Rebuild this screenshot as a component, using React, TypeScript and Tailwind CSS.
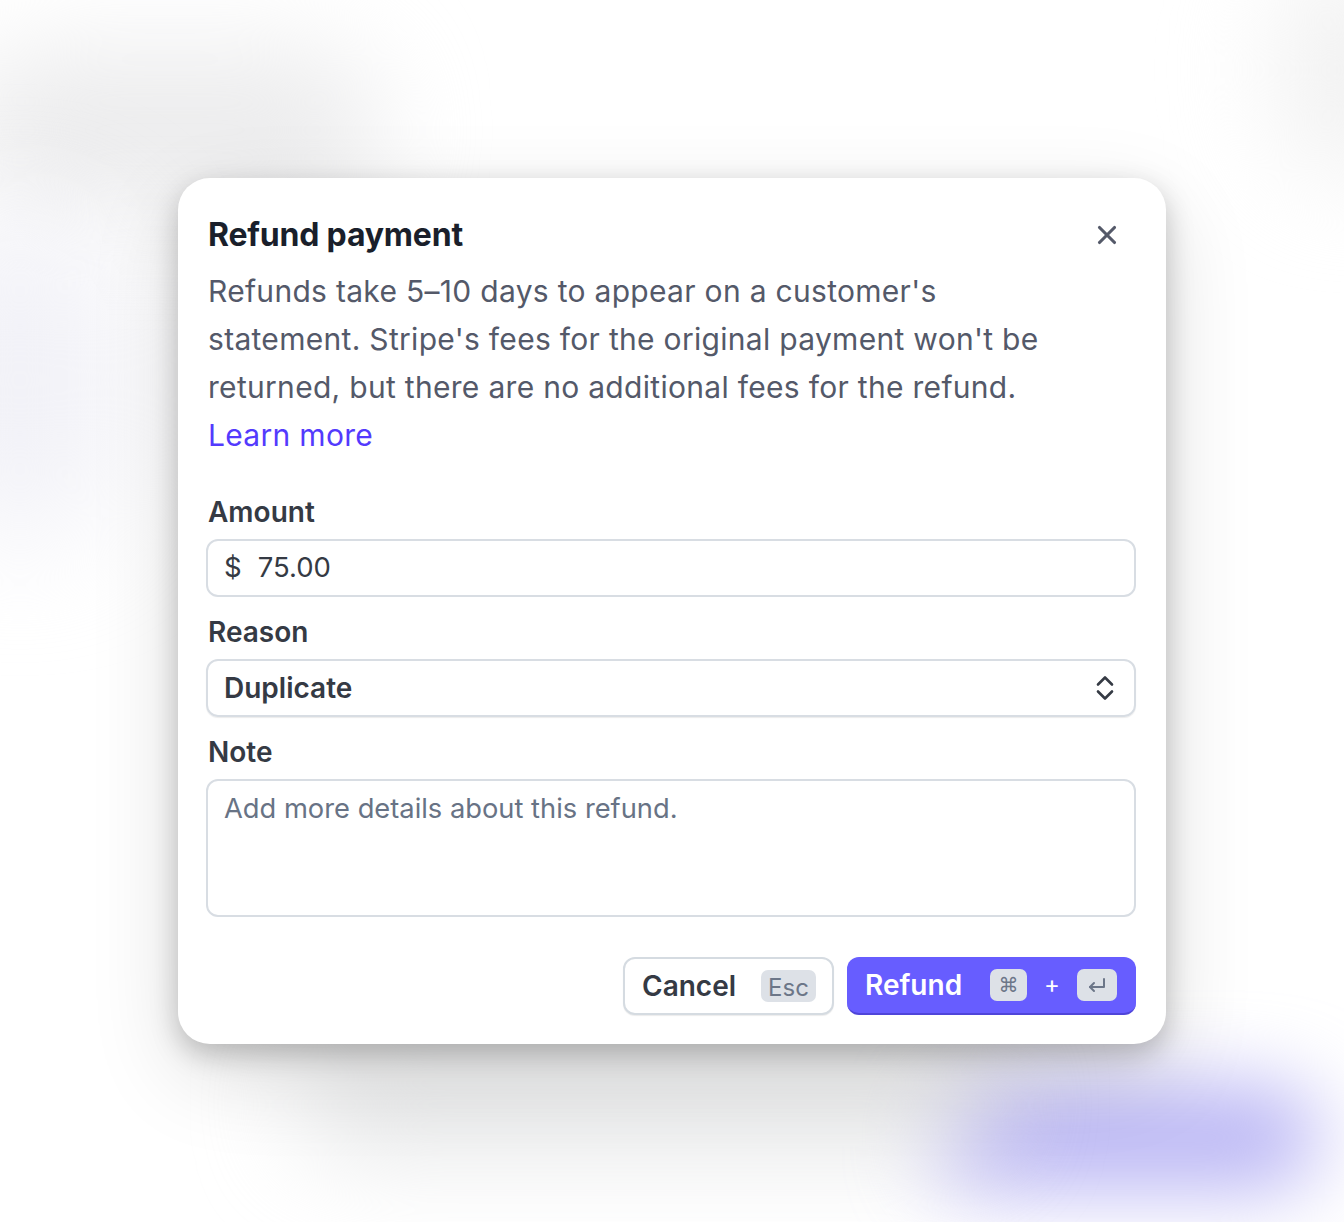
import { X } from 'lucide-react';

function Kbd({ children, className = '' }: { children: React.ReactNode; className?: string }) {
  return (
    <span
      className={`grid h-8 place-items-center rounded-[7px] bg-[#dde1e7] text-[24px] font-normal text-[#6c7688] ${className}`}
    >
      {children}
    </span>
  );
}

function ChevronUpDown() {
  return (
    <svg width="22" height="28" viewBox="0 0 22 28" fill="none" stroke="#353a44" strokeWidth="2.6" strokeLinecap="round" strokeLinejoin="round">
      <path d="M4 10.5 11 3.5l7 7" />
      <path d="M4 17.5l7 7 7-7" />
    </svg>
  );
}

function ReturnIcon() {
  return (
    <svg width="22" height="18" viewBox="0 0 22 18" fill="none" stroke="#6c7688" strokeWidth="2" strokeLinecap="round" strokeLinejoin="round">
      <path d="M18 3v8H4" />
      <path d="M8 7l-4 4 4 4" />
    </svg>
  );
}

export default function App() {
  return (
    <div
      className="relative h-[1222px] overflow-hidden bg-white text-[#353a44]"
      style={{ fontFamily: 'Inter, "Noto Sans", sans-serif' }}
    >
      {/* Ambient backdrop */}
      <div className="pointer-events-none absolute left-[-40px] top-[50px] h-[160px] w-[420px] rounded-full bg-[#ececed] blur-[50px]" />
      <div className="pointer-events-none absolute left-[-80px] top-[220px] h-[320px] w-[200px] rounded-full bg-[#f1f1f7] blur-[60px]" />
      <div className="pointer-events-none absolute right-[-100px] top-[-40px] h-[220px] w-[170px] rounded-full bg-[#f2f2f2] blur-[50px]" />
      <div className="pointer-events-none absolute left-[930px] top-[1085px] h-[105px] w-[390px] rounded-full bg-[#b9b5f4] blur-[40px]" />
      <div className="pointer-events-none absolute left-[300px] top-[1060px] h-[90px] w-[700px] rounded-full bg-[#e4e5e6] blur-[50px]" />

      {/* Dialog */}
      <div className="relative mx-auto mt-[178px] w-[988px] rounded-[32px] bg-white pb-[29px] pl-7 pr-[30px] pt-[39px] shadow-[0_10px_28px_rgba(0,0,0,0.22),0_30px_90px_rgba(0,0,0,0.14)]">
        <div className="flex items-center justify-between pl-0.5">
          <h2 className="text-[32px] font-bold leading-[36px] tracking-[-0.2px] text-[#1a1f2b]">Refund payment</h2>
          <X size={30} strokeWidth={2.5} className="mr-[14px] text-[#545969]" />
        </div>
        <p className="mt-[14px] max-w-[870px] pl-0.5 text-[30px] leading-[48px] tracking-[0.3px] text-[#545969]">
          Refunds take 5–10 days to appear on a customer's statement. Stripe's fees for the original payment won't be
          returned, but there are no additional fees for the refund.
          <br />
          <span className="text-[#533afd]">Learn more</span>
        </p>

        <div className="mt-[35px] flex flex-col">
          <label className="pl-0.5 text-[28px] font-semibold leading-[36px] text-[#353a44]">Amount</label>
          <div className="mt-[9px] flex h-[58px] items-center gap-[16px] rounded-[12px] border-2 border-[#d8dde3] px-[16px] text-[27.5px] text-[#353a44]">
            <span>$</span>
            <span>75.00</span>
          </div>

          <label className="mt-[17px] pl-0.5 text-[28px] font-semibold leading-[36px] text-[#353a44]">Reason</label>
          <div className="mt-[9px] flex h-[58px] items-center justify-between rounded-[12px] border-2 border-[#d8dde3] pl-[16px] pr-[18px] text-[28px] font-semibold text-[#353a44] shadow-[0_1px_1px_rgba(0,0,0,0.08)]">
            <span>Duplicate</span>
            <ChevronUpDown />
          </div>

          <label className="mt-[17px] pl-0.5 text-[28px] font-semibold leading-[36px] text-[#353a44]">Note</label>
          <div className="mt-[9px] h-[138px] rounded-[12px] border-2 border-[#d8dde3] px-[16px] pt-[10px] text-[27.3px] leading-[36px] text-[#687385]">
            Add more details about this refund.
          </div>
        </div>

        <div className="mt-[40px] flex justify-end gap-[13px]">
          <button className="flex h-[58px] w-[211px] items-center justify-between rounded-[12px] border-2 border-[#d5dbe1] bg-white pl-[17px] pr-[16px] text-[28px] font-semibold text-[#353a44] shadow-[0_1px_1px_rgba(0,0,0,0.08)]">
            <span>Cancel</span>
            <Kbd className="w-[55px]">Esc</Kbd>
          </button>
          <button className="flex h-[58px] w-[289px] items-center rounded-[12px] border-b-2 border-[#4f45d9] bg-[#675dff] pl-[18px] pr-[16px] text-[28px] font-semibold text-white">
            <span>Refund</span>
            <Kbd className="ml-[28px] w-[37px]">
              <span style={{ fontFamily: '"DejaVu Sans", sans-serif' }} className="text-[20px]">⌘</span>
            </Kbd>
            <span className="mx-[17px] text-[24px] font-normal">+</span>
            <Kbd className="w-[40px]">
              <ReturnIcon />
            </Kbd>
          </button>
        </div>
      </div>
    </div>
  );
}
